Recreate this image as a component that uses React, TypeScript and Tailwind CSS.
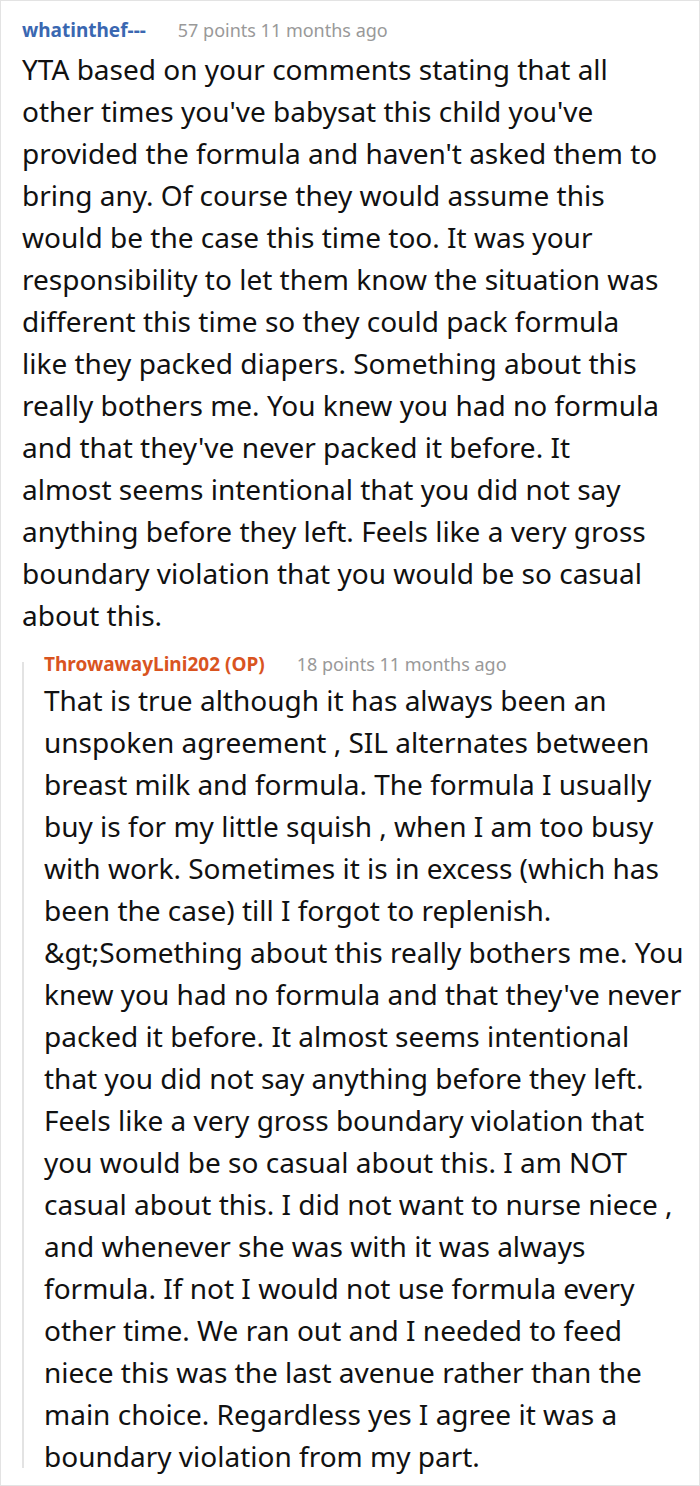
const first = [
  'YTA based on your comments stating that all',
  "other times you've babysat this child you've",
  "provided the formula and haven't asked them to",
  'bring any. Of course they would assume this',
  'would be the case this time too. It was your',
  'responsibility to let them know the situation was',
  'different this time so they could pack formula',
  'like they packed diapers. Something about this',
  'really bothers me. You knew you had no formula',
  "and that they've never packed it before. It",
  'almost seems intentional that you did not say',
  'anything before they left. Feels like a very gross',
  'boundary violation that you would be so casual',
  'about this.',
];

const reply = [
  'That is true although it has always been an',
  'unspoken agreement , SIL alternates between',
  'breast milk and formula. The formula I usually',
  'buy is for my little squish , when I am too busy',
  'with work. Sometimes it is in excess (which has',
  'been the case) till I forgot to replenish.',
  '&gt;Something about this really bothers me. You',
  "knew you had no formula and that they've never",
  'packed it before. It almost seems intentional',
  'that you did not say anything before they left.',
  'Feels like a very gross boundary violation that',
  'you would be so casual about this. I am NOT',
  'casual about this. I did not want to nurse niece ,',
  'and whenever she was with it was always',
  'formula. If not I would not use formula every',
  'other time. We ran out and I needed to feed',
  'niece this was the last avenue rather than the',
  'main choice. Regardless yes I agree it was a',
  'boundary violation from my part.',
];

function Meta({ name, points, op }: { name: string; points: string; op?: boolean }) {
  return (
    <div className="flex items-center gap-[32px] h-[28px] leading-[28px]">
      <span className={`text-[19px] font-bold ${op ? 'text-[#d9541f]' : 'text-[#3a67b1]'}`}>{name}</span>
      <span className="text-[18px] text-[#999999]">{points} points 11 months ago</span>
    </div>
  );
}

function Body({ lines }: { lines: string[] }) {
  return (
    <p className="text-[28px] leading-[42px] whitespace-nowrap">
      {lines.map((l, i) => (
        <span key={i} className="block">{l}</span>
      ))}
    </p>
  );
}

export default function App() {
  return (
    <div
      className="w-[700px] h-[1486px] overflow-hidden bg-white border border-[#e3e3e3] pl-[21px] pr-[16px] pt-[15px] text-[#111111]"
      style={{ fontFamily: '"Noto Sans", "Open Sans", sans-serif' }}
    >
      <Meta name="whatinthef---" points="57" />
      <div className="mt-[4px]">
        <Body lines={first} />
      </div>

      <div className="flex mt-[14px]">
        <div className="w-[2px] bg-[#e3e3e3] mt-[12px] mb-[9px] shrink-0" />
        <div className="pl-[20px] flex-1">
          <Meta name="ThrowawayLini202 (OP)" points="18" op />
          <div className="mt-[1px]">
            <Body lines={reply} />
          </div>
        </div>
      </div>
    </div>
  );
}
